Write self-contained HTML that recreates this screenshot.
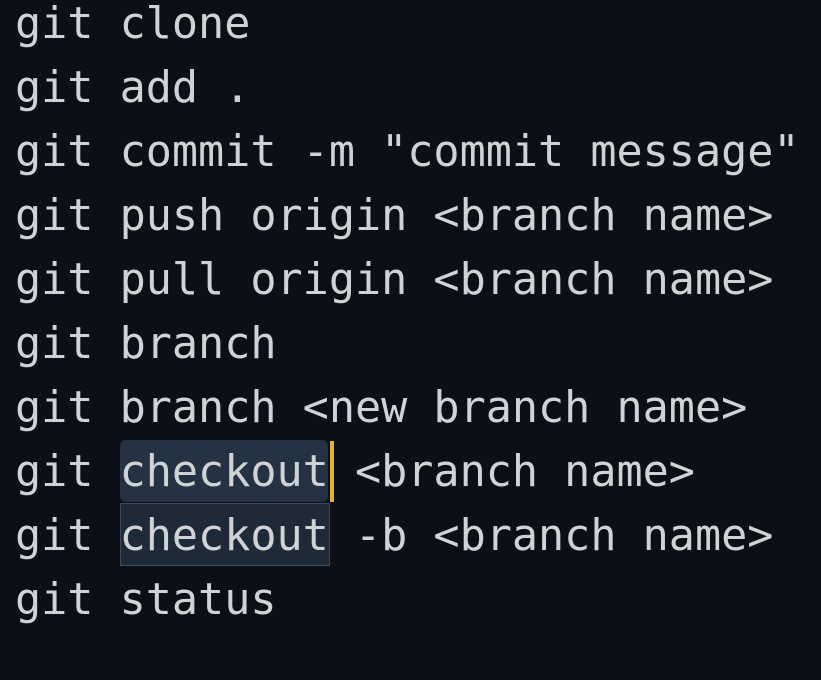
<!DOCTYPE html>
<html><head><style>
html,body{margin:0;padding:0;background:#0c1016;width:821px;height:680px;overflow:hidden}
pre{position:absolute;left:15px;top:-8px;margin:0;font-family:"DejaVu Sans Mono","Liberation Mono",monospace;font-size:43.45px;line-height:64px;color:#cfd3d6;white-space:pre}
.h1{position:absolute;left:120px;top:440px;width:208px;height:62px;background:#253243;border-radius:6px}
.h2{position:absolute;left:120px;top:503px;width:208px;height:61px;background:#1f2a38;border:1px solid #3b4a5c}
.cur{position:absolute;left:330px;top:441px;width:4px;height:61px;background:#e0b030}
</style></head><body>
<div class="h1"></div><div class="h2"></div><div class="cur"></div>
<pre>git clone
git add .
git commit -m "commit message"
git push origin &lt;branch name&gt;
git pull origin &lt;branch name&gt;
git branch
git branch &lt;new branch name&gt;
git checkout &lt;branch name&gt;
git checkout -b &lt;branch name&gt;
git status</pre>
</body></html>
